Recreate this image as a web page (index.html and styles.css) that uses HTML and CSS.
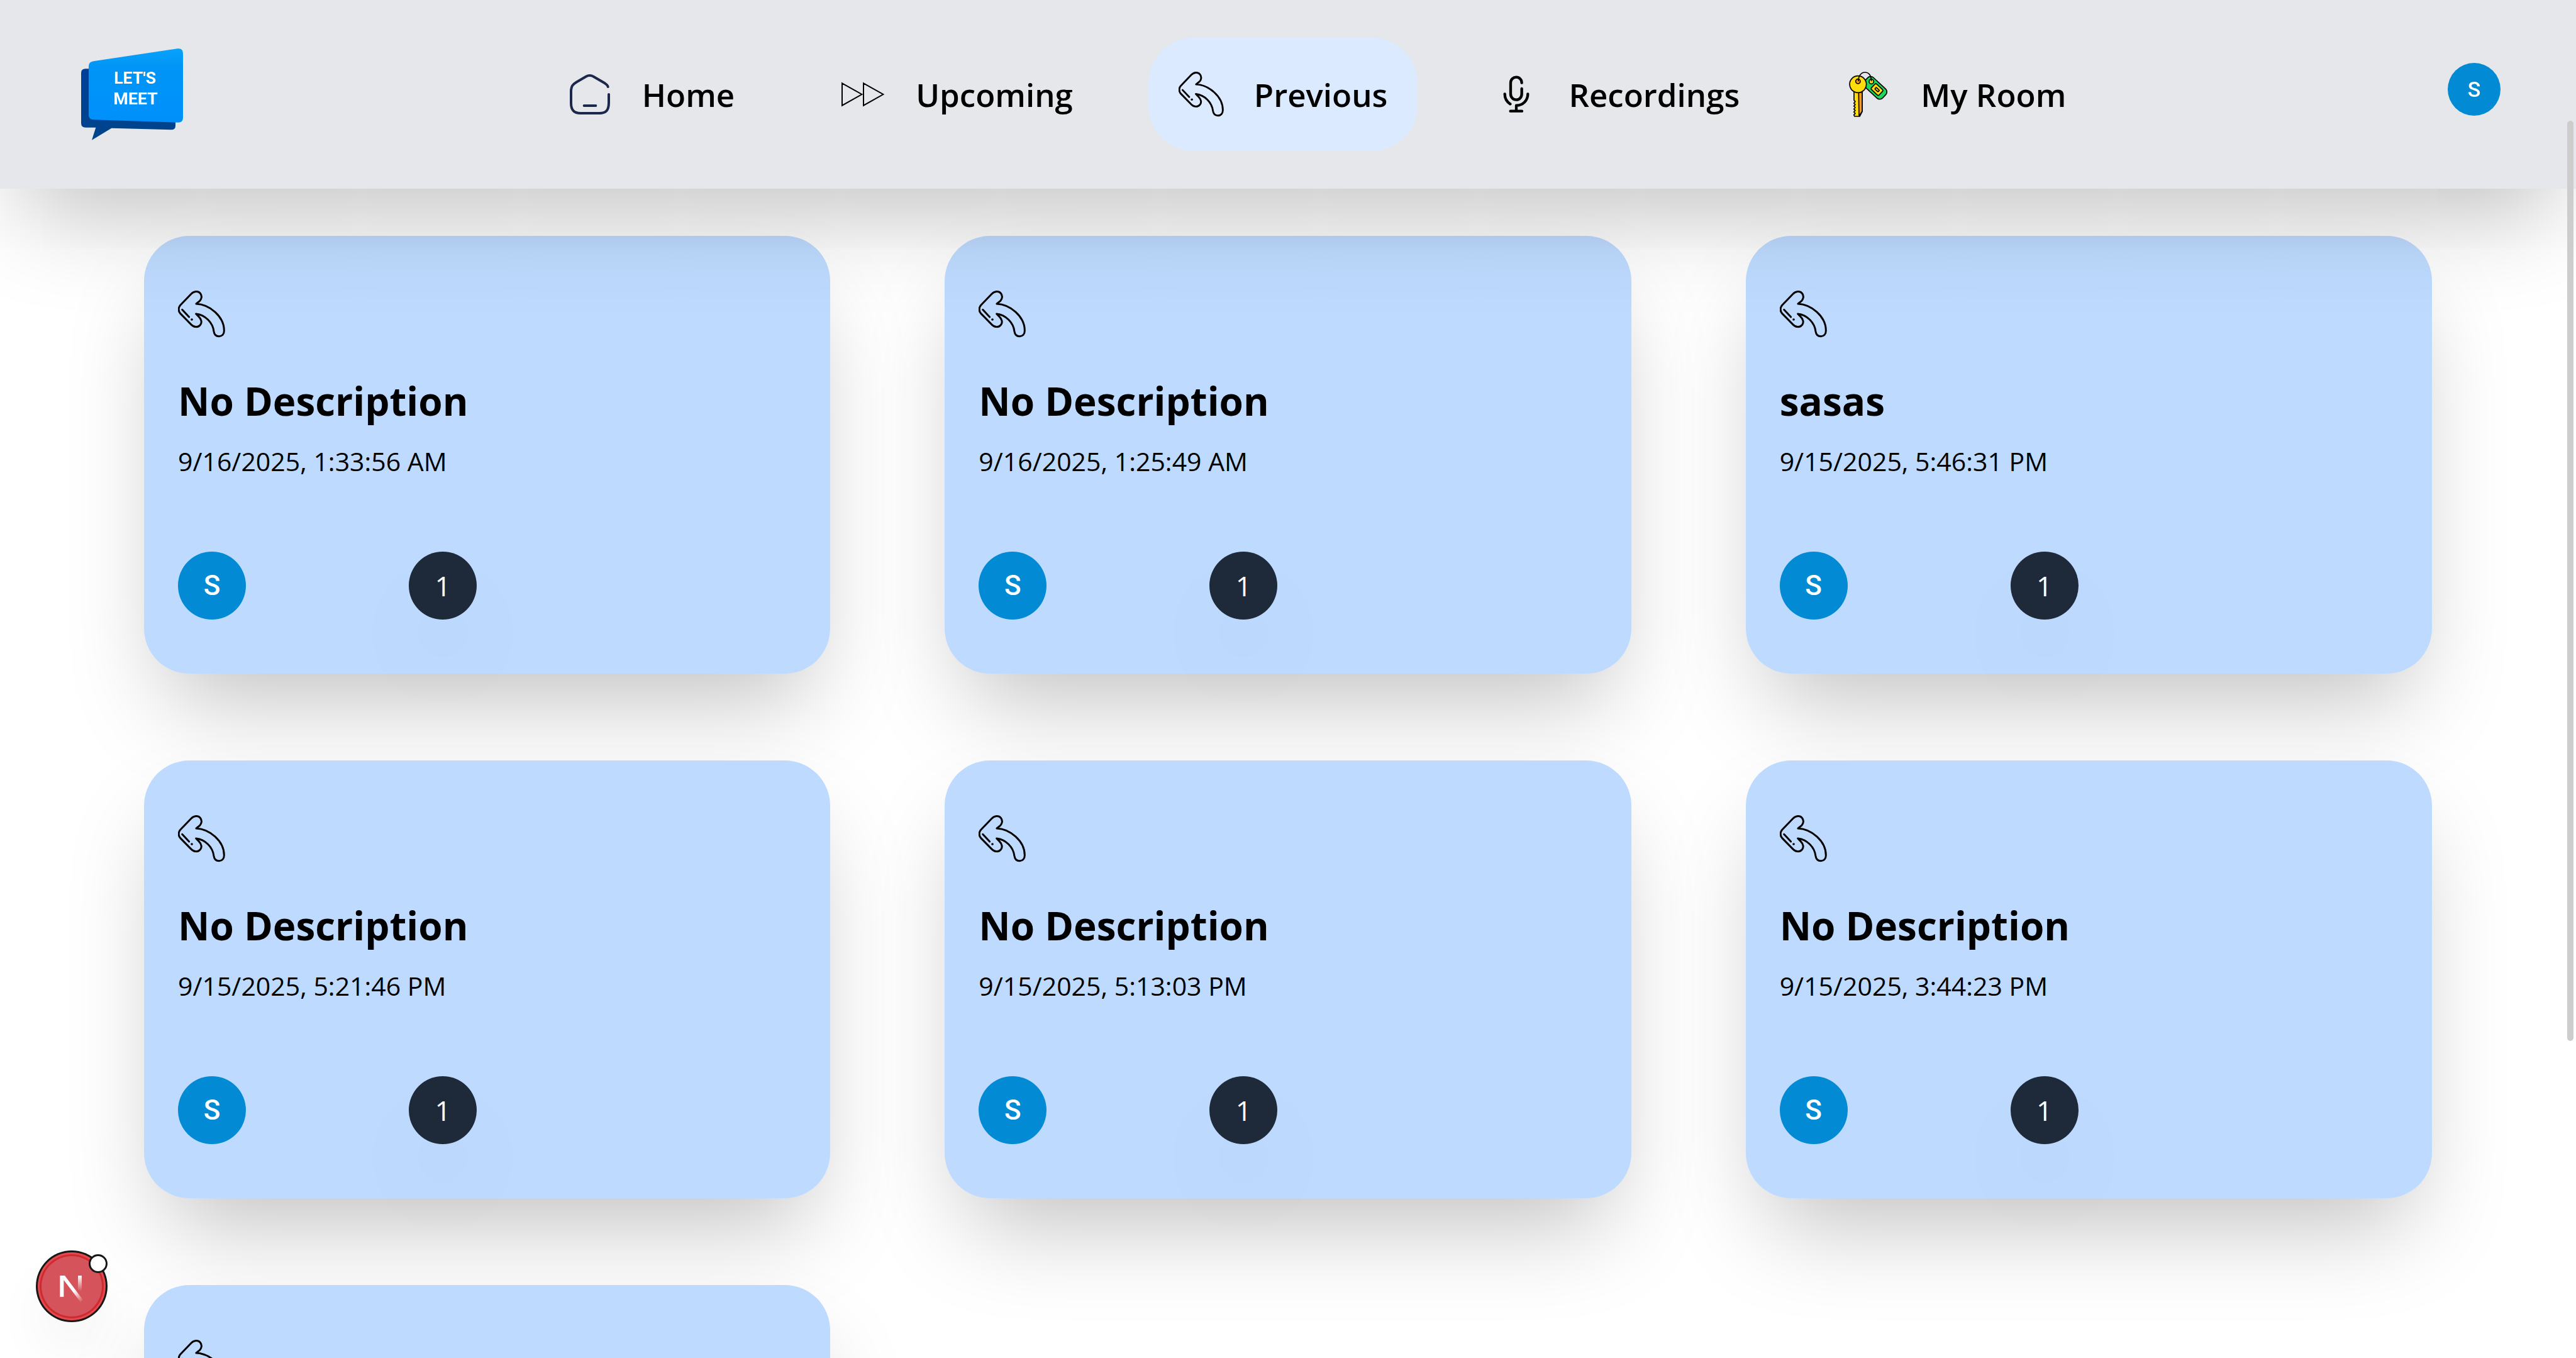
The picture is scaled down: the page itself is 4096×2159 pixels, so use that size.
FILE: index.html
```html
<!DOCTYPE html>
<html lang="en">
<head>
<meta charset="utf-8">
<title>Let's Meet - Previous</title>
<link rel="stylesheet" href="styles.css">
</head>
<body>
<svg class="sprite" aria-hidden="true">
  <symbol id="reply" viewBox="0 0 225 225">
    <g fill="none" stroke="#000" stroke-width="9" stroke-linecap="round" stroke-linejoin="round">
      <path d="M11 70 L63 16 C76 2 96 1 106 13 C116 25 113 40 104 49 L87 63 C150 66 220 122 220 191 C220 208 210 218 196 218 C182 218 173 209 171 195 C166 152 130 116 86 111 L99 124 C113 138 115 154 106 164 C96 176 77 176 64 163 L11 109 C1 98 1 81 11 70Z"/>
      <path d="M20 91 L53 126"/>
      <path d="M66 138h.1" stroke-width="11"/>
    </g>
  </symbol>
</svg>

<div class="page">
  <header class="topbar">
    <a class="logo" href="#" aria-label="Let's Meet">
      <svg viewBox="60 39 522 522">
        <defs>
          <linearGradient id="front" x1="0" y1="0" x2="0" y2="1">
            <stop offset="0" stop-color="#08a2fb"/><stop offset=".25" stop-color="#0095f6"/><stop offset="1" stop-color="#0090fb"/>
          </linearGradient>
          <linearGradient id="back" x1="0" y1="0" x2="0" y2="1">
            <stop offset="0" stop-color="#003f9a"/><stop offset="1" stop-color="#00448a"/>
          </linearGradient>
        </defs>
        <path fill="url(#back)" d="M108 178H520Q537 178 537 196V450Q537 469 517 469L232 461L138 518L157 458H108Q87 458 87 438V198Q87 178 108 178Z"/>
        <path fill="url(#front)" d="M146 142L546 82Q573 78 573 104V412Q573 435 549 434L146 421Q123 420 123 398V166Q123 145 146 142Z"/>
        <g fill="#fff" font-family="Roboto, sans-serif" font-weight="700" font-size="80" text-anchor="middle">
          <text x="344" y="248">LET'S</text>
          <text x="347" y="347">MEET</text>
        </g>
      </svg>
    </a>
    <nav class="nav">
      <a class="nav-link" href="#">
        <svg class="nav-icon" viewBox="0 0 216 216" fill="none" stroke="#1c274c" stroke-width="12" stroke-linecap="round">
          <path d="M197 72C196 65 190 60 182 55L128 23C117 17 103 17 92 23L46 50C28 61 22 70 21 92V150C21 184 36 198 66 198H156C188 198 201 184 201 148V108M83 162H139"/>
        </svg>
        <span>Home</span>
      </a>
      <a class="nav-link" href="#">
        <svg class="nav-icon" viewBox="0 0 216 216" fill="none" stroke="#000" stroke-width="6">
          <path d="M9 55L103 108L9 161ZM111 55L205 108L111 161Z"/>
        </svg>
        <span>Upcoming</span>
      </a>
      <a class="nav-link nav-link-active" href="#" aria-current="page">
        <svg class="nav-icon"><use href="#reply"/></svg>
        <span>Previous</span>
      </a>
      <a class="nav-link" href="#">
        <svg class="nav-icon" viewBox="0 0 216 216" fill="none" stroke="#000" stroke-width="13" stroke-linecap="round" stroke-linejoin="round">
          <path d="M137 53C137 37 125 26 111 26S84 37 84 53V106C84 122 96 134 111 134S137 122 137 106V81M56 106C56 126 66 144 82 154M166 106C166 138 142 161 111 161V188M83 188H138"/>
        </svg>
        <span>Recordings</span>
      </a>
      <a class="nav-link" href="#">
        <svg class="nav-icon" viewBox="0 0 216 216" stroke="#000" stroke-width="5" stroke-linejoin="round">
          <g transform="rotate(43 143 77)">
            <rect x="84" y="47" width="118" height="60" rx="19" fill="#1fd65f"/>
            <rect x="130" y="59" width="50" height="36" rx="7" fill="#ffdc0a"/>
            <rect x="145" y="72" width="21" height="10" rx="3" fill="#ffdc0a"/>
          </g>
          <circle cx="125" cy="47" r="11" fill="#ffdc0a"/>
          <path d="M42 96H81V190L69 213H45L41 206L48 199L41 192L48 185L41 178L48 171L41 164L48 157L41 150L48 143L42 136Z" fill="#ffdc0a"/>
          <path d="M64 98H81V190L66 211Z" fill="#ff9811"/>
          <circle cx="61" cy="60" r="40" fill="#ffdc0a"/>
          <circle cx="61" cy="46" r="11" fill="#ff9811"/>
          <path d="M63 46C62 20 76 3 94 3S124 18 125 46" fill="none"/>
        </svg>
        <span>My Room</span>
      </a>
    </nav>
    <button class="user" type="button">S</button>
  </header>

  <main class="meetings">
    <article class="card">
      <svg class="card-icon"><use href="#reply"/></svg>
      <h2 class="card-title">No Description</h2>
      <p class="card-date">9/16/2025, 1:33:56 AM</p>
      <div class="people"><span class="avatar">S</span><span class="count">1</span></div>
    </article>
    <article class="card">
      <svg class="card-icon"><use href="#reply"/></svg>
      <h2 class="card-title">No Description</h2>
      <p class="card-date">9/16/2025, 1:25:49 AM</p>
      <div class="people"><span class="avatar">S</span><span class="count">1</span></div>
    </article>
    <article class="card">
      <svg class="card-icon"><use href="#reply"/></svg>
      <h2 class="card-title">sasas</h2>
      <p class="card-date">9/15/2025, 5:46:31 PM</p>
      <div class="people"><span class="avatar">S</span><span class="count">1</span></div>
    </article>
    <article class="card">
      <svg class="card-icon"><use href="#reply"/></svg>
      <h2 class="card-title">No Description</h2>
      <p class="card-date">9/15/2025, 5:21:46 PM</p>
      <div class="people"><span class="avatar">S</span><span class="count">1</span></div>
    </article>
    <article class="card">
      <svg class="card-icon"><use href="#reply"/></svg>
      <h2 class="card-title">No Description</h2>
      <p class="card-date">9/15/2025, 5:13:03 PM</p>
      <div class="people"><span class="avatar">S</span><span class="count">1</span></div>
    </article>
    <article class="card">
      <svg class="card-icon"><use href="#reply"/></svg>
      <h2 class="card-title">No Description</h2>
      <p class="card-date">9/15/2025, 3:44:23 PM</p>
      <div class="people"><span class="avatar">S</span><span class="count">1</span></div>
    </article>
    <article class="card card-peek">
      <svg class="card-icon"><use href="#reply"/></svg>
    </article>
  </main>
</div>

<div class="scroll-thumb"></div>

<button class="dev-badge" type="button" aria-label="Developer tools">
  <svg viewBox="0 0 342 342">
    <defs>
      <linearGradient id="diag" gradientUnits="userSpaceOnUse" x1="180" y1="195" x2="222" y2="246">
        <stop offset="0" stop-color="#fff"/><stop offset="1" stop-color="#fff" stop-opacity="0"/>
      </linearGradient>
      <linearGradient id="stem" gradientUnits="userSpaceOnUse" x1="0" y1="120" x2="0" y2="194">
        <stop offset="0" stop-color="#fff"/><stop offset="1" stop-color="#fff" stop-opacity="0"/>
      </linearGradient>
    </defs>
    <circle cx="171" cy="171" r="171" fill="#171717"/>
    <circle cx="171" cy="171" r="162" fill="#e5484d"/>
    <circle cx="171" cy="171" r="153" fill="#cd2b31"/>
    <circle cx="171" cy="171" r="144" fill="#d5535a"/>
    <path d="M115 120H138L225 236L213 246L133 141V221H115Z" fill="url(#diag)"/>
    <rect x="201" y="120" width="18" height="74" fill="url(#stem)"/>
  </svg>
  <span class="dev-dot"></span>
</button>
</body>
</html>
```
FILE: styles.css
```css
* {
  box-sizing: border-box;
}

body {
  margin: 0;
  background: #fff;
  color: #000;
  font-family: "Open Sans", "Noto Sans", sans-serif;
}

.sprite {
  position: absolute;
  width: 0;
  height: 0;
}

.page {
  height: 100vh;
  overflow-y: auto;
  overflow-x: hidden;
  scrollbar-width: none;
}

/* Top bar */
.topbar {
  position: sticky;
  top: 0;
  z-index: 10;
  display: flex;
  align-items: center;
  justify-content: space-between;
  padding: 60px 120px;
  background: #e5e7eb;
  box-shadow: 0 75px 150px -36px rgba(0, 0, 0, 0.25);
}

.logo {
  display: block;
  width: 174px;
  height: 174px;
}

.logo svg {
  display: block;
  width: 100%;
  height: 100%;
}

.nav {
  display: flex;
  gap: 72px;
}

.nav-link {
  display: flex;
  align-items: center;
  gap: 48px;
  padding: 48px;
  border-radius: 72px;
  color: #000;
  font-size: 51px;
  font-weight: 600;
  line-height: 84px;
  text-decoration: none;
}

.nav-link-active {
  background: #dbeafe;
}

.nav-icon {
  width: 72px;
  height: 72px;
}

.user {
  width: 84px;
  height: 84px;
  margin-bottom: 16px;
  padding: 0;
  border: 0;
  border-radius: 50%;
  background: #028ad4;
  color: #fff;
  font-family: Roboto, sans-serif;
  font-size: 34px;
  font-weight: 500;
}

/* Meeting cards */
.meetings {
  display: grid;
  grid-template-columns: repeat(3, 1fr);
  gap: 138px 182px;
  padding: 75px 229px 150px;
}

.card {
  padding: 87px 54px 86px;
  border-radius: 72px;
  background: #bedbff;
  box-shadow: 0 75px 150px -36px rgba(0, 0, 0, 0.25);
}

.card-peek {
  padding-bottom: 534px;
}

.card-icon {
  display: block;
  width: 75px;
  height: 75px;
}

.card-title {
  margin: 52px 0 12px;
  font-size: 62px;
  font-weight: 700;
  line-height: 96px;
}

.card-date {
  margin: 0;
  font-size: 41px;
  line-height: 72px;
}

.people {
  display: flex;
  gap: 259px;
  margin-top: 108px;
}

.avatar,
.count {
  width: 108px;
  height: 108px;
  border-radius: 50%;
  color: #fff;
  font-size: 44px;
  line-height: 108px;
  text-align: center;
}

.avatar {
  background: #028ad4;
  font-family: Roboto, sans-serif;
  font-weight: 500;
}

.count {
  background: #1e2939;
  box-shadow: 0 75px 150px -36px rgba(0, 0, 0, 0.25);
}

/* Floating pieces over the page */
.scroll-thumb {
  position: fixed;
  top: 192px;
  right: 4px;
  z-index: 20;
  width: 10px;
  height: 1463px;
  border-radius: 5px;
  background: #cdcdcd;
}

.dev-badge {
  position: fixed;
  left: 57px;
  bottom: 57px;
  z-index: 20;
  width: 114px;
  height: 114px;
  padding: 0;
  border: 0;
  border-radius: 50%;
  background: none;
  box-shadow: 0 48px 96px -24px rgba(0, 0, 0, 0.12);
}

.dev-badge svg {
  display: block;
  width: 114px;
  height: 114px;
}

.dev-dot {
  position: absolute;
  top: 6px;
  right: 0;
  width: 30px;
  height: 30px;
  border: 3px solid #171717;
  border-radius: 50%;
  background: #fff;
}
```
